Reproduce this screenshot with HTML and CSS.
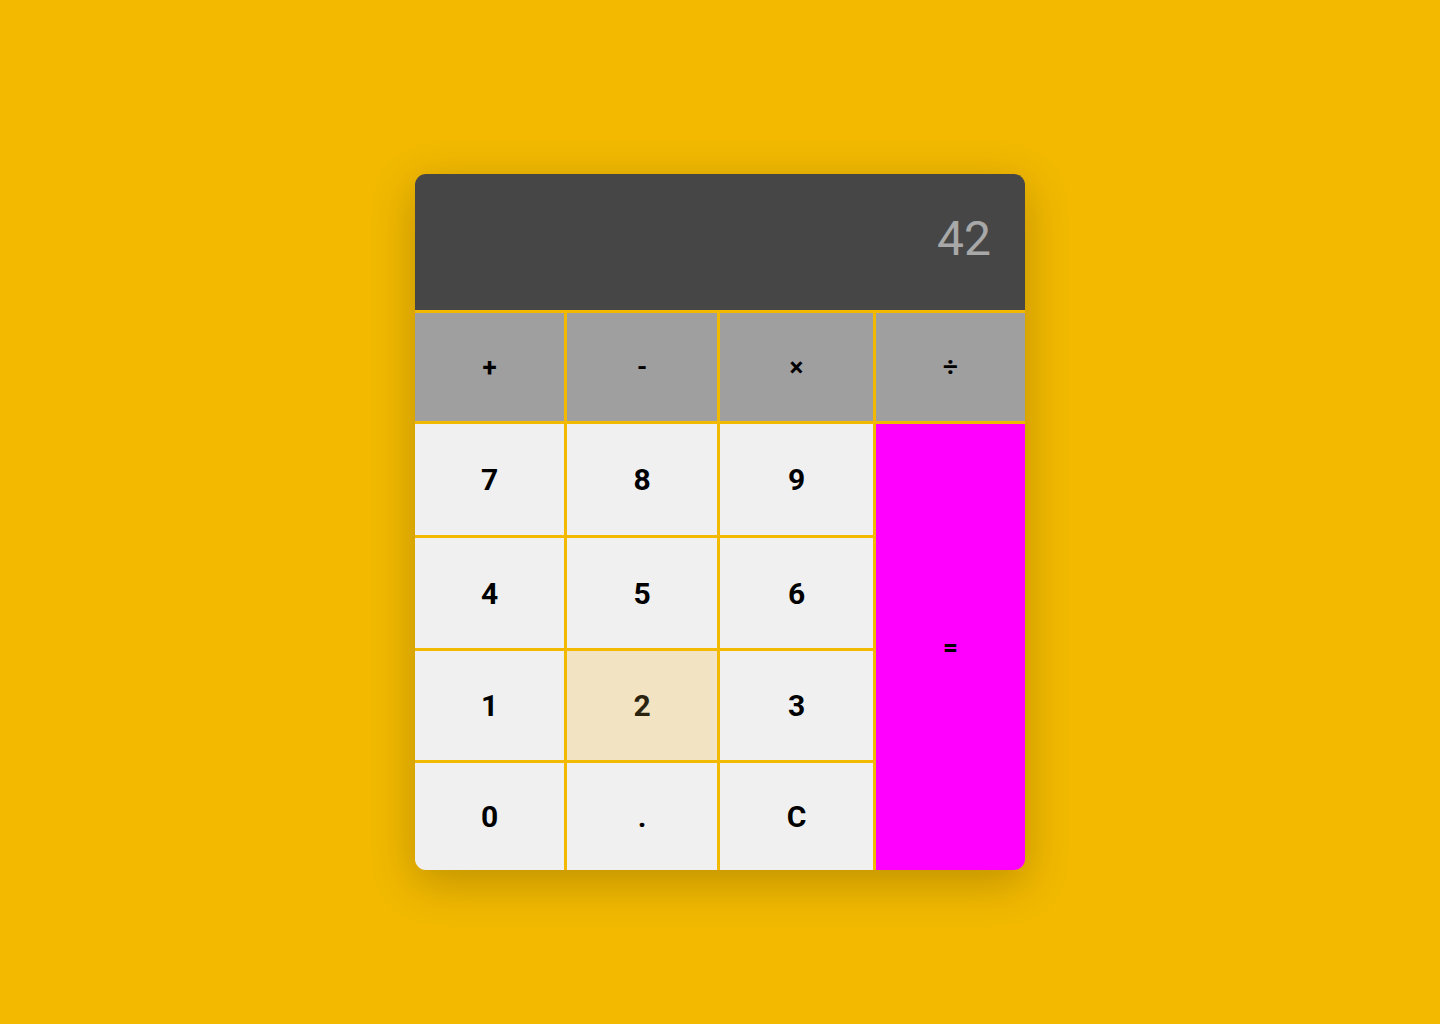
FILE: index.html
```html
<!DOCTYPE html>
<html lang="en">
<head>
<meta charset="utf-8">
<title>Calculator</title>
<link rel="stylesheet" href="styles.css">
</head>
<body>
<div class="calc">
  <div class="display">42</div>
  <button class="key op">+</button>
  <button class="key op">-</button>
  <button class="key op">×</button>
  <button class="key op">÷</button>
  <button class="key">7</button>
  <button class="key">8</button>
  <button class="key">9</button>
  <button class="key equals">=</button>
  <button class="key">4</button>
  <button class="key">5</button>
  <button class="key">6</button>
  <button class="key">1</button>
  <button class="key hover">2</button>
  <button class="key">3</button>
  <button class="key">0</button>
  <button class="key">.</button>
  <button class="key">C</button>
</div>
</body>
</html>
```
FILE: styles.css
```css
html, body {
  margin: 0;
  padding: 0;
  height: 100%;
}
body {
  background: #f2b900;
  font-family: Roboto, "Liberation Sans", sans-serif;
}
.calc {
  width: 610px;
  margin: 174px auto 0;
  display: grid;
  grid-template-columns: 149px 150px 153px 149px;
  grid-template-rows: 136px 108px 111px 110px 109px 107px;
  gap: 3px;
  border-radius: 11px;
  overflow: hidden;
  box-shadow: 0 12px 45px rgba(0, 0, 0, 0.22);
}
.display {
  grid-column: 1 / -1;
  background: #464646;
  color: #a8a8a8;
  font-size: 48px;
  display: flex;
  align-items: center;
  justify-content: flex-end;
  padding: 0 34px 8px 0;
}
.key {
  border: none;
  margin: 0;
  padding: 0;
  background: #f0f0f0;
  color: #000;
  font-family: Roboto, "Liberation Sans", sans-serif;
  font-weight: 700;
  font-size: 30px;
  display: flex;
  align-items: center;
  justify-content: center;
}
.key.op {
  background: #a09f9f;
  font-size: 26px;
}
.key.hover {
  background: #f2e4c2;
  color: #2a2310;
}
.key.equals {
  grid-column: 4;
  grid-row: 3 / span 4;
  background: #ff00ff;
  font-size: 26px;
}
```
